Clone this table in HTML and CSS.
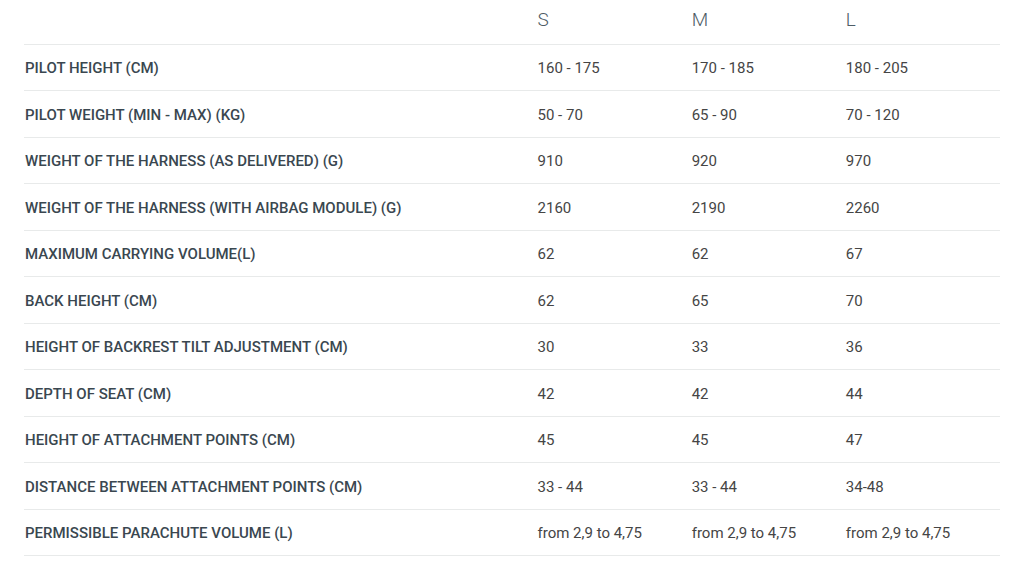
FILE: index.html
```html
<!DOCTYPE html>
<html lang="en">
<head>
<meta charset="utf-8">
<title>Harness sizes</title>
<link rel="stylesheet" href="styles.css">
</head>
<body>
<table class="specs">
  <thead>
    <tr><th class="label"></th><th>S</th><th>M</th><th>L</th></tr>
  </thead>
  <tbody>
    <tr><td class="label">PILOT HEIGHT (CM)</td><td>160 - 175</td><td>170 - 185</td><td>180 - 205</td></tr>
    <tr><td class="label">PILOT WEIGHT (MIN - MAX) (KG)</td><td>50 - 70</td><td>65 - 90</td><td>70 - 120</td></tr>
    <tr><td class="label">WEIGHT OF THE HARNESS (AS DELIVERED) (G)</td><td>910</td><td>920</td><td>970</td></tr>
    <tr><td class="label">WEIGHT OF THE HARNESS (WITH AIRBAG MODULE) (G)</td><td>2160</td><td>2190</td><td>2260</td></tr>
    <tr><td class="label">MAXIMUM CARRYING VOLUME(L)</td><td>62</td><td>62</td><td>67</td></tr>
    <tr><td class="label">BACK HEIGHT (CM)</td><td>62</td><td>65</td><td>70</td></tr>
    <tr><td class="label">HEIGHT OF BACKREST TILT ADJUSTMENT (CM)</td><td>30</td><td>33</td><td>36</td></tr>
    <tr><td class="label">DEPTH OF SEAT (CM)</td><td>42</td><td>42</td><td>44</td></tr>
    <tr><td class="label">HEIGHT OF ATTACHMENT POINTS (CM)</td><td>45</td><td>45</td><td>47</td></tr>
    <tr><td class="label">DISTANCE BETWEEN ATTACHMENT POINTS (CM)</td><td>33 - 44</td><td>33 - 44</td><td>34-48</td></tr>
    <tr><td class="label">PERMISSIBLE PARACHUTE VOLUME (L)</td><td>from 2,9 to 4,75</td><td>from 2,9 to 4,75</td><td>from 2,9 to 4,75</td></tr>
  </tbody>
</table>
</body>
</html>
```
FILE: styles.css
```css
html, body {
  margin: 0;
  padding: 0;
  background: #ffffff;
}
body {
  padding: 0 24px 0 24px;
  font-family: "Roboto", "Liberation Sans", sans-serif;
}
.specs {
  width: 976px;
  border-collapse: collapse;
  table-layout: fixed;
}
.specs th,
.specs td {
  padding: 0;
  text-align: left;
  vertical-align: middle;
  width: 154px;
}
.specs .label {
  width: 512px;
  padding-left: 1px;
}
.specs thead tr {
  height: 44px;
}
.specs th {
  font-weight: 300;
  font-size: 19px;
  color: #4e5c66;
  padding-bottom: 5px;
}
.specs tbody tr {
  height: 46.5px;
  border-top: 1px solid #e8eaea;
}
.specs tbody tr:last-child {
  border-bottom: 1px solid #e8eaea;
}
.specs td {
  font-size: 15px;
  color: #454545;
  padding-top: 2px;
}
.specs td.label {
  font-size: 15px;
  font-weight: 500;
  color: #3a4750;
}
```
